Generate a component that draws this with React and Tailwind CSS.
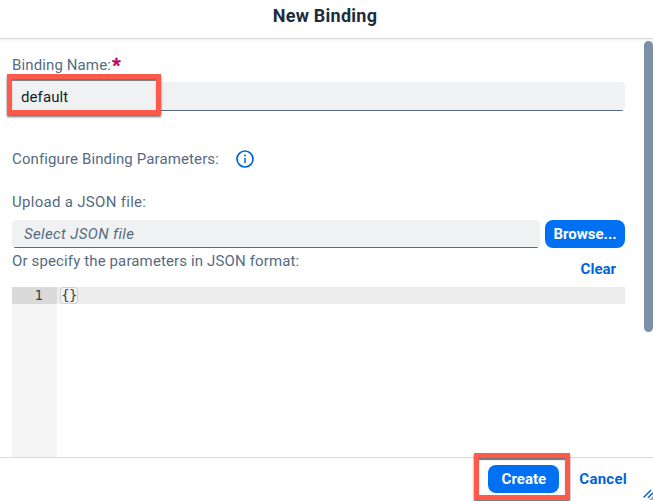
function Highlight({ className }) {
  return (
    <div
      className={`pointer-events-none absolute z-10 border-5 border-[#ff594b] shadow-[0_2px_2px_rgba(0,0,0,0.55),inset_0_2px_1px_rgba(0,0,0,0.55)] ${className}`}
    />
  );
}

function Label({ children, className = "" }) {
  return (
    <span className={`text-[15px] leading-5 whitespace-nowrap text-[#556b82] ${className}`}>
      {children}
    </span>
  );
}

function InfoIcon() {
  return (
    <svg className="ml-[17px] size-[18px]" viewBox="0 0 18 18" fill="none" stroke="#0064d9" strokeWidth="1.7">
      <circle cx="9" cy="9" r="8" />
      <path d="M9 8.4v4.4" strokeWidth="1.5" strokeLinecap="round" />
      <circle cx="9" cy="5.5" r="1" fill="#0064d9" stroke="none" />
    </svg>
  );
}

function Header() {
  return (
    <header className="z-1 flex h-[39px] shrink-0 justify-center border-b border-[#d9d9d9] pt-1.5 shadow-[0_1px_2px_rgba(0,0,0,0.08)]">
      <h1 className="mr-[3px] text-[18px] leading-5 font-bold tracking-[0.25px] text-[#1d2d3e]">New Binding</h1>
    </header>
  );
}

function Editor() {
  return (
    <div className="mt-[7px] flex h-[170px] font-['DejaVu_Sans_Mono',monospace] text-[14px] leading-[17px]">
      <div className="w-[45px] bg-[#f5f5f5] text-[#444]">
        <div className="h-[17px] bg-[#dadada] pr-3.5 text-right">1</div>
      </div>
      <div className="flex h-[17px] flex-1 bg-[#ededed] pl-[3px] text-[#444]">
        <span className="h-[17px] w-[18px] rounded-[3px] border border-[#d0d0d0] bg-[#f2f2f2] text-center leading-[14px] tracking-[-0.8px]">
          {"{}"}
        </span>
      </div>
    </div>
  );
}

function Body() {
  return (
    <main className="flex h-[418px] shrink-0 overflow-hidden">
      <div className="ml-3 flex w-[613px] flex-col">
        <div className="mt-4 flex h-5">
          <Label className="tracking-[0.12px]">Binding Name:</Label>
          <span className="ml-px text-[19px] leading-[20px] font-bold text-[#ba066c] [-webkit-text-stroke:0.5px_#ba066c]">*</span>
        </div>
        <div className="relative mt-[7px] flex h-[29px] items-center overflow-hidden rounded-[4px] bg-[#eff1f2] pt-0.5 pl-[9px] text-[15px] tracking-[0.1px] text-[#131e29]">
          default
          <i className="absolute inset-x-0.5 bottom-0 h-px bg-[#556b82]" />
        </div>
        <div className="mt-[38px] flex h-5 items-center">
          <Label className="tracking-[0.12px]">Configure Binding Parameters:</Label>
          <InfoIcon />
        </div>
        <Label className="mt-[23px] tracking-[0.3px]">Upload a JSON file:</Label>
        <div className="mt-2 flex h-7 gap-[5px]">
          <div className="relative flex w-[528px] items-center overflow-hidden rounded-[4px] bg-[#eff1f2] pl-3 text-[15px] tracking-[0.38px] text-[#556b82] italic">
            Select JSON file
            <i className="absolute inset-x-0.5 bottom-0 h-px bg-[#556b82]" />
          </div>
          <button className="w-20 rounded-[8px] bg-[#0070f2] text-[15px] font-bold text-white">Browse...</button>
        </div>
        <div className="flex h-8 justify-between">
          <Label className="mt-[3px] tracking-[0.13px]">Or specify the parameters in JSON format:</Label>
          <button className="mt-[11px] mr-[9px] h-5 text-[15px] leading-5 font-bold text-[#0064d9]">Clear</button>
        </div>
        <Editor />
      </div>
      <div className="mt-0.5 ml-[19px] h-[291px] w-[9px] rounded-full bg-[#7b91a8]" />
    </main>
  );
}

function Footer() {
  return (
    <footer className="relative flex h-11 shrink-0 justify-end border-t border-[#d9d9d9] pt-[7px] pr-[26px] text-[15px] font-bold">
      <button className="h-7 w-[71px] rounded-[8px] bg-[#0070f2] text-white">Create</button>
      <button className="ml-5 h-7 tracking-[0.25px] text-[#0064d9]">Cancel</button>
      <svg className="absolute right-0 bottom-0 h-3 w-2.5" viewBox="0 0 10 12" fill="none" stroke="#0064d9" strokeWidth="1.5">
        <path d="M0.5 8.5 8 1M5 8.7 10 3.7" />
        <path d="M6 11l4-4v4z" fill="#aaa" stroke="none" />
      </svg>
    </footer>
  );
}

export default function App() {
  return (
    <div className="relative flex h-[501px] w-[653px] flex-col overflow-hidden bg-white font-[Roboto,sans-serif]">
      <Header />
      <Body />
      <Footer />
      <Highlight className="top-[74px] left-[7px] h-[41px] w-[154px]" />
      <Highlight className="top-[453px] left-[474px] h-[47px] w-24" />
    </div>
  );
}
